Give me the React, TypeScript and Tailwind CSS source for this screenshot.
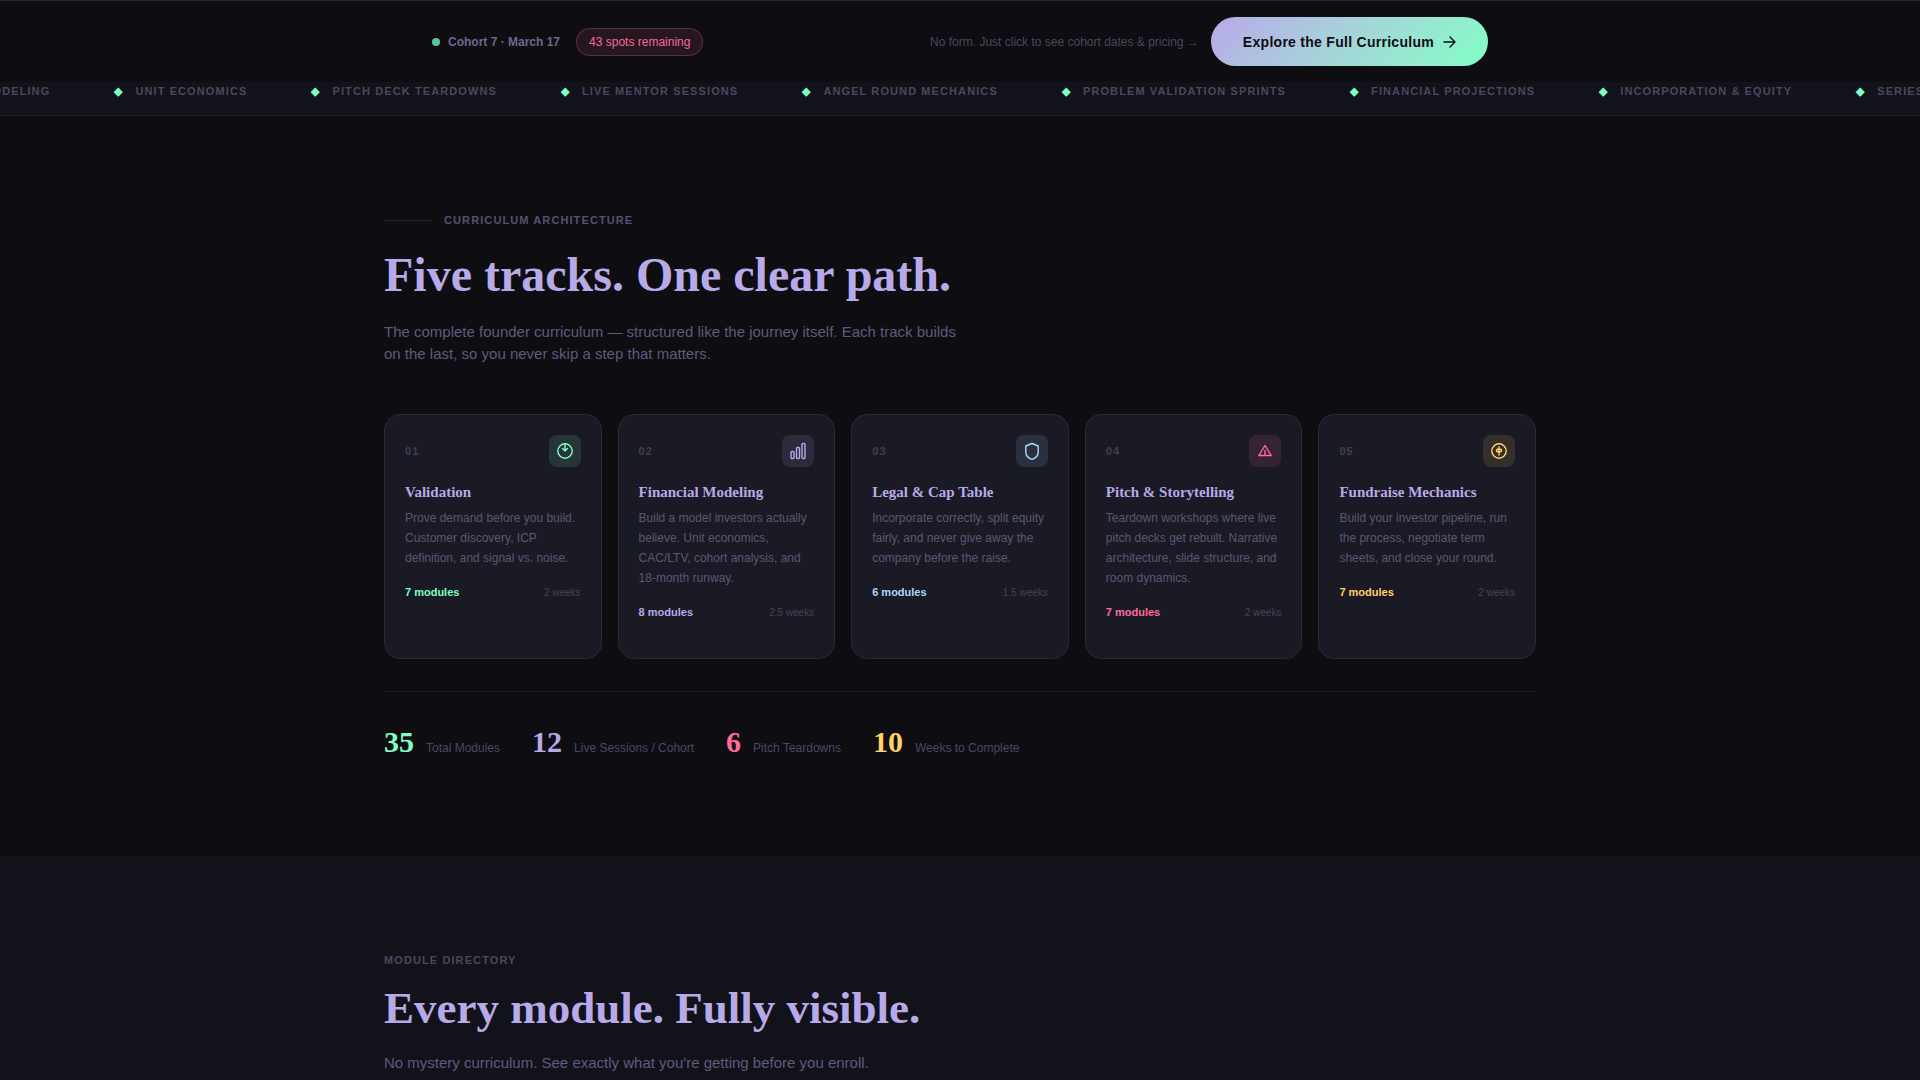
import React from 'react';

interface Track {
  num: string;
  title: string;
  desc: string;
  modules: string;
  weeks: string;
  color: string;
  tile: string;
  icon: React.ReactNode;
}

const TOPICS = [
  'Financial Modeling',
  'Unit Economics',
  'Pitch Deck Teardowns',
  'Live Mentor Sessions',
  'Angel Round Mechanics',
  'Problem Validation Sprints',
  'Financial Projections',
  'Incorporation & Equity',
  'Series A Readiness',
];

const TRACKS: Track[] = [
  {
    num: '01',
    title: 'Validation',
    desc: 'Prove demand before you build. Customer discovery, ICP definition, and signal vs. noise.',
    modules: '7 modules',
    weeks: '2 weeks',
    color: 'text-[#7fffc4]',
    tile: 'bg-[#7fffc4]/12',
    icon: (
      <>
        <circle cx="9" cy="9" r="7.2" />
        <path d="M9 2v7M6.5 6.5L9 9l2.5-2.5" />
      </>
    ),
  },
  {
    num: '02',
    title: 'Financial Modeling',
    desc: 'Build a model investors actually believe. Unit economics, CAC/LTV, cohort analysis, and 18-month runway.',
    modules: '8 modules',
    weeks: '2.5 weeks',
    color: 'text-[#b8a9e8]',
    tile: 'bg-[#b8a9e8]/12',
    icon: (
      <>
        <rect x="2" y="9.5" width="3" height="7" rx="1" />
        <rect x="7.5" y="5.5" width="3" height="11" rx="1" />
        <rect x="13" y="1.5" width="3" height="15" rx="1" />
      </>
    ),
  },
  {
    num: '03',
    title: 'Legal & Cap Table',
    desc: 'Incorporate correctly, split equity fairly, and never give away the company before the raise.',
    modules: '6 modules',
    weeks: '1.5 weeks',
    color: 'text-[#a8d8ff]',
    tile: 'bg-[#a8d8ff]/12',
    icon: <path d="M9 1.5L15.2 4v6c0 3.6-2.6 6.2-6.2 7.3C5.4 16.2 2.8 13.6 2.8 10V4z" />,
  },
  {
    num: '04',
    title: 'Pitch & Storytelling',
    desc: 'Teardown workshops where live pitch decks get rebuilt. Narrative architecture, slide structure, and room dynamics.',
    modules: '7 modules',
    weeks: '2 weeks',
    color: 'text-[#ff6b9d]',
    tile: 'bg-[#ff6b9d]/12',
    icon: <path d="M2.8 13.5L9 3.5l6.2 10H2.8zM9 8.5v5" />,
  },
  {
    num: '05',
    title: 'Fundraise Mechanics',
    desc: 'Build your investor pipeline, run the process, negotiate term sheets, and close your round.',
    modules: '7 modules',
    weeks: '2 weeks',
    color: 'text-[#ffd166]',
    tile: 'bg-[#ffd166]/12',
    icon: (
      <>
        <circle cx="9" cy="9" r="7.2" />
        <path d="M9 5v8M11.5 8.5c0 1-1 1.5-2.5 1.5S6.5 9.5 6.5 8.5 7.5 7 9 7s2.5.5 2.5 1.5z" />
      </>
    ),
  },
];

const STATS = [
  { value: '35', label: 'Total Modules', color: 'text-[#7fffc4]' },
  { value: '12', label: 'Live Sessions / Cohort', color: 'text-[#b8a9e8]' },
  { value: '6', label: 'Pitch Teardowns', color: 'text-[#ff6b9d]' },
  { value: '10', label: 'Weeks to Complete', color: 'text-[#ffd166]' },
];

const serif = "font-['Liberation_Serif',serif]";

const CohortBar: React.FC = () => (
  <header className="sticky top-0 z-10 border-t border-[#25252f] bg-[#0d0d12]">
    <div className="mx-auto flex max-w-6xl items-center justify-between px-12 py-4">
      <div className="flex items-center gap-4">
        <div className="flex items-center gap-2 text-xs font-bold text-[#6f6790]">
          <span className="size-2 rounded-full bg-[#5cc498]" />
          Cohort 7 · March 17
        </div>
        <span className="rounded-full border border-[#ff6b9d]/25 bg-[#ff6b9d]/10 px-3 py-[5px] text-xs text-[#f56a99]">
          43 spots remaining
        </span>
      </div>
      <div className="flex items-center gap-3">
        <span className="text-xs text-[#4a485e]">No form. Just click to see cohort dates &amp; pricing →</span>
        <button className="flex h-[49px] cursor-pointer items-center gap-2 rounded-full bg-linear-135 from-[#b8a9e8] to-[#7fffc4] px-8 text-sm font-bold tracking-[0.02em] text-[#0d0d12]">
          Explore the Full Curriculum
          <svg width="14" height="14" viewBox="0 0 14 14" fill="none" stroke="currentColor" strokeWidth="1.4" strokeLinecap="round" strokeLinejoin="round">
            <path d="M2 7h11M8 2l5 5-5 5" />
          </svg>
        </button>
      </div>
    </div>
  </header>
);

// the top of the strip slides under the sticky bar
const TopicTicker: React.FC = () => (
  <div className="-mt-4 overflow-hidden border-y border-[#1e1e28] bg-[#12121a] py-4">
    <div className="-ml-36 flex w-max">
      {TOPICS.map((topic) => (
        <div
          key={topic}
          className="flex items-center gap-3 px-8 text-[11px] leading-4 font-bold tracking-[0.1em] whitespace-nowrap text-[#4a485e] uppercase"
        >
          <span className="text-[#7fffc4]">◆</span>
          {topic}
        </div>
      ))}
    </div>
  </div>
);

const TrackCard: React.FC<{ track: Track }> = ({ track }) => (
  <article className="rounded-2xl border border-[#2a2a36] bg-[#1a1a24] px-5 pt-5 pb-[37px]">
    <div className="flex items-center justify-between">
      <span className="text-[11px] leading-4 font-bold tracking-[0.1em] text-[#403f50]">{track.num}</span>
      <span className={`flex size-8 items-center justify-center rounded-lg ${track.tile} ${track.color}`}>
        <svg width="18" height="18" viewBox="0 0 18 18" fill="none" stroke="currentColor" strokeWidth="1.4" strokeLinecap="round" strokeLinejoin="round">
          {track.icon}
        </svg>
      </span>
    </div>
    <h3 className={`mt-4 text-[15px] leading-[18px] font-bold text-[#b8a9e8] ${serif}`}>{track.title}</h3>
    <p className="mt-[7px] text-xs leading-5 text-[#5a5773]">{track.desc}</p>
    <div className="mt-4 flex items-baseline justify-between leading-4">
      <span className={`text-[11px] font-bold ${track.color}`}>{track.modules}</span>
      <span className="text-[10px] text-[#454357]">{track.weeks}</span>
    </div>
  </article>
);

const App: React.FC = () => {
  return (
    <div className="min-h-screen bg-[#0d0d12] font-['Liberation_Sans',Arial,sans-serif]">
      <CohortBar />
      <TopicTicker />

      <section className="py-24">
        <div className="mx-auto max-w-6xl">
          <div className="flex items-center gap-3">
            <span className="h-px w-12 bg-[#25252f]" />
            <span className="text-[11px] leading-4 font-bold tracking-[0.1em] text-[#56516f] uppercase">
              Curriculum Architecture
            </span>
          </div>
          <h2 className={`mt-5 text-5xl leading-[53px] font-bold text-[#b8a9e8] ${serif}`}>
            Five tracks. One clear path.
          </h2>
          <p className="mt-5 max-w-[580px] text-[15px] leading-[22px] text-[#5f5b7d]">
            The complete founder curriculum — structured like the journey itself. Each track builds on the last, so you
            never skip a step that matters.
          </p>

          <div className="mt-[49px] grid grid-cols-5 gap-4">
            {TRACKS.map((track) => (
              <TrackCard key={track.num} track={track} />
            ))}
          </div>

          <div className="mt-8 flex gap-8 border-t border-[#1a1a24] pt-8">
            {STATS.map((stat) => (
              <div key={stat.label} className="flex items-baseline gap-3">
                <span className={`text-3xl font-bold ${stat.color} ${serif}`}>{stat.value}</span>
                <span className="text-xs text-[#4a4866]">{stat.label}</span>
              </div>
            ))}
          </div>
        </div>
      </section>

      <section className="bg-[#12121a] pt-24 pb-4">
        <div className="mx-auto max-w-6xl">
          <div className="text-[11px] leading-4 font-bold tracking-[0.1em] text-[#4a485e] uppercase">Module Directory</div>
          <h2 className={`mt-4 text-[45px] leading-[48px] font-bold text-[#b8a9e8] ${serif}`}>
            Every module. Fully visible.
          </h2>
          <p className="mt-5 text-[15px] leading-[22px] text-[#5f5b7d]">
            No mystery curriculum. See exactly what you're getting before you enroll.
          </p>
        </div>
      </section>
    </div>
  );
};

export default App;
